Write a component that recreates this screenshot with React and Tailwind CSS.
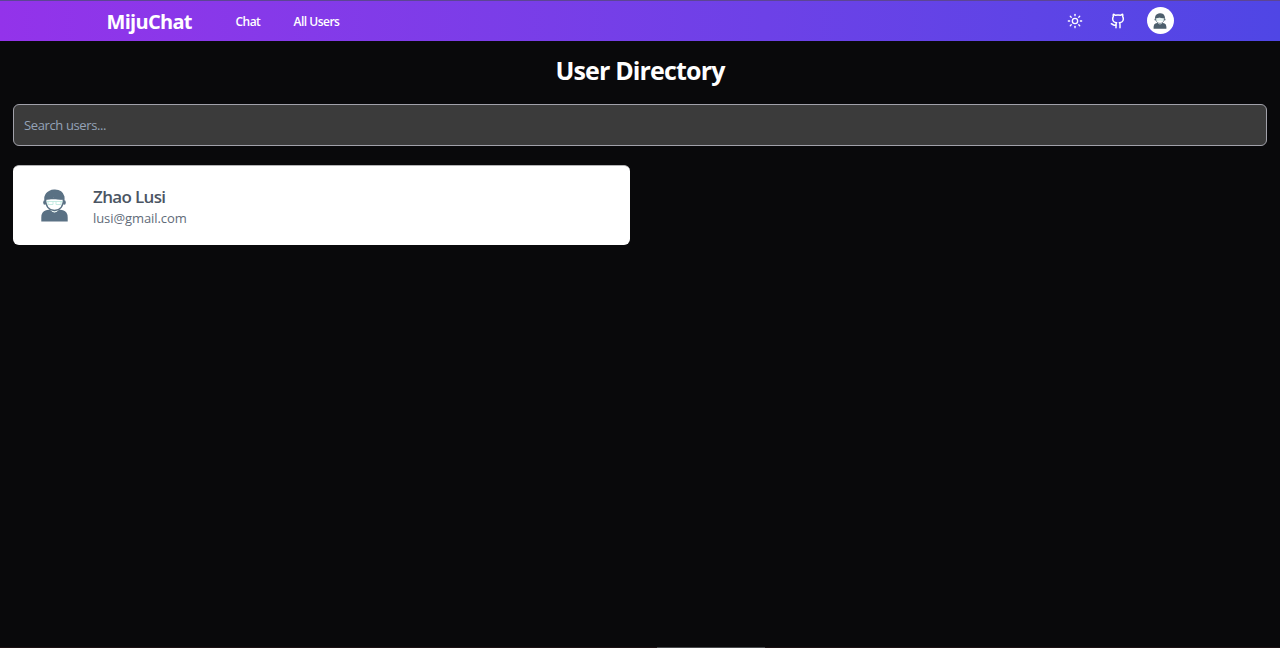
import { Github, Sun } from "lucide-react";

function Avatar({ className, fill = "#5a7184" }) {
  return (
    <svg viewBox="0 0 27 33" className={className} aria-hidden="true">
      <path d="M0.3 32.5V28.5Q0.3 22.5 5 21.3L9 20.5Q13.5 26 18 20.5L22 21.3Q26.7 22.5 26.7 28.5V32.5Z" fill={fill} />
      <path d="M9.5 19H17.5V21.3Q13.5 25.5 9.5 21.3Z" fill="#e9f5f3" />
      <ellipse cx="3.7" cy="13.5" rx="1.5" ry="2.2" fill={fill} />
      <ellipse cx="23.3" cy="13.5" rx="1.5" ry="2.2" fill={fill} />
      <path d="M4.5 9.5Q4.5 21 13.5 21.5Q22.5 21 22.5 9.5Z" fill="#fff" stroke={fill} strokeWidth="1.3" />
      <path d="M3.3 12V8Q4.5 3.5 8 2Q11 0.3 14 0.6Q21.5 0.6 23.5 7.5V12L22 10.7Q16 11.4 12.5 8.8Q9 11 5 10.8Z" fill={fill} />
      <path d="M5.5 12.5H21.5M7 12.5V15.5H12V12.5M15 12.5V15.5H20V12.5" fill="none" stroke="#b8e6dc" strokeWidth="0.8" />
    </svg>
  );
}

function Header() {
  return (
    <header className="flex h-[41px] items-center justify-between border-t border-[#5c4594] bg-linear-to-r from-[#9333ea] to-[#4f46e5] px-[106.5px] text-white">
      <div className="flex items-center">
        <a className="w-[129px] pt-px text-[20px] leading-[28px] font-bold whitespace-nowrap tracking-[-0.7px]">MijuChat</a>
        <nav className="flex pt-[2px] text-[12px] leading-[20px] font-semibold whitespace-nowrap">
          <a className="w-[58px] tracking-[-0.55px]">Chat</a>
          <a className="tracking-[-0.5px]">All Users</a>
        </nav>
      </div>
      <div className="flex items-center">
        <Sun size={16} strokeWidth={2} className="mr-[27px]" />
        <Github size={16} strokeWidth={2.2} className="mr-[21px]" />
        <span className="mb-px flex size-[27px] items-center justify-center rounded-full bg-white">
          <Avatar className="h-[16px] w-[14px]" fill="#4d5f6c" />
        </span>
      </div>
    </header>
  );
}

export default function App() {
  return (
    <div className="flex h-[648px] flex-col overflow-hidden bg-[#09090b] font-['Open_Sans','Noto_Sans',sans-serif]">
      <Header />
      <main className="flex-1 px-[13px] pt-[13px]">
        <h1 className="text-center text-[25px] leading-[32px] font-bold tracking-[-0.85px] text-white">User Directory</h1>
        <input
          type="text"
          placeholder="Search users..."
          className="mt-[18px] block h-[42px] w-full rounded-[6px] border border-[#a1a1aa] bg-[#3b3b3b] px-[10px] text-[13px] tracking-[-0.38px] text-white placeholder:text-[#94a3b8]"
        />
        <div className="mt-[19px] grid grid-cols-2 gap-[20px]">
          <div className="flex h-[80px] items-center rounded-[6px] border-t border-[#b4b4b6] bg-white pl-[27.5px]">
            <Avatar className="h-[33px] w-[27px]" />
            <div className="ml-[25.5px] pt-[3px] whitespace-nowrap">
              <h2 className="text-[17px] leading-[22px] font-semibold tracking-[-0.65px] text-[#4b5563]">Zhao Lusi</h2>
              <p className="text-[13px] leading-[20px] tracking-[-0.08px] text-[#616b79]">lusi@gmail.com</p>
            </div>
          </div>
        </div>
      </main>
      <div className="flex h-px bg-[#1c1214] pl-[657px]">
        <div className="w-[108px] bg-[#4a4a4c]" />
      </div>
    </div>
  );
}
